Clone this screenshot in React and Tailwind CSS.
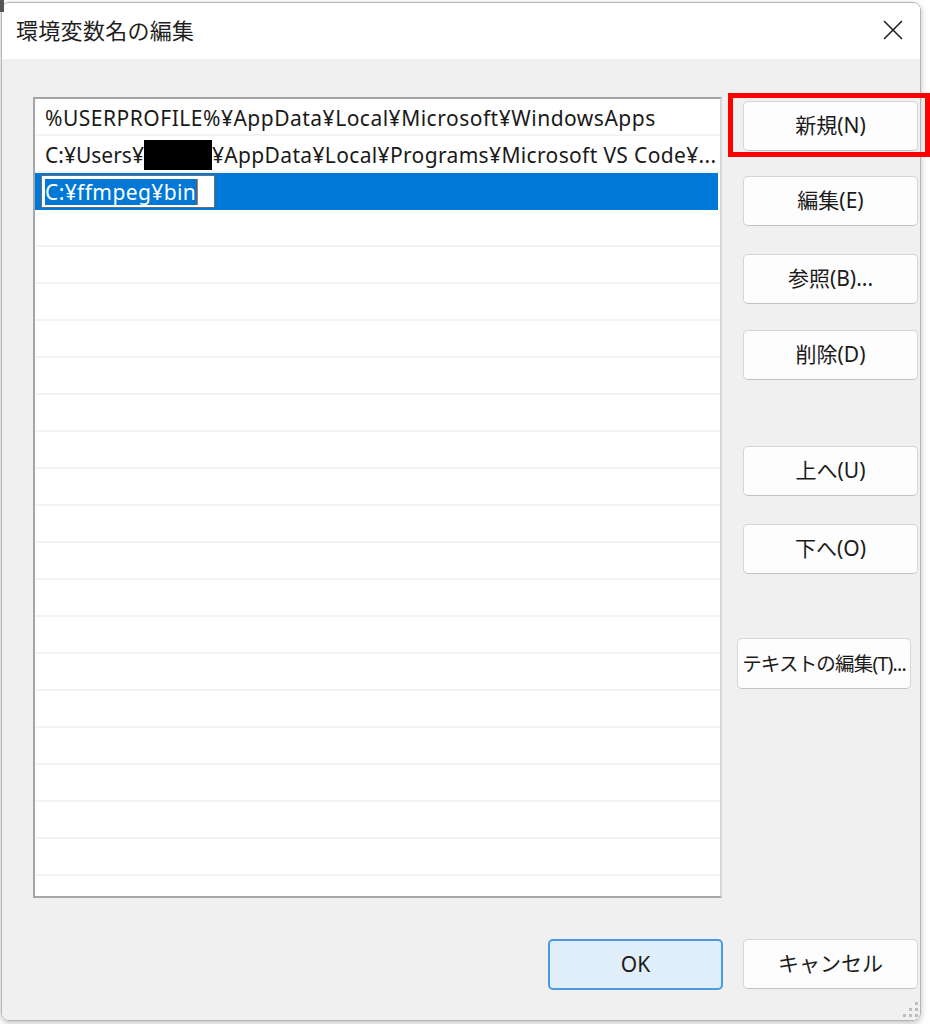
import React from "react";

const font = { fontFamily: '"Noto Sans", "Noto Sans CJK JP", sans-serif' };

function Btn({ children, className = "" }) {
  return (
    <div
      className={
        "h-[50px] w-[175px] flex items-center justify-center rounded-[5px] border border-[#d5d5d5] border-b-[#c2c2c2] bg-[#fdfdfd] text-[21px] text-[#1b1b1b] whitespace-nowrap " +
        className
      }
    >
      {children}
    </div>
  );
}

export default function App() {
  const rows = Array.from({ length: 22 });
  return (
    <div className="relative w-[930px] h-[1024px] bg-white overflow-hidden" style={font}>
      <div className="absolute left-0 top-0 w-[4px] h-[12px] bg-[#555]" />
      <div className="ml-[1px] mt-[2px] w-[920px] h-[1019px] rounded-[8px] border border-[#b4b4b4] overflow-hidden flex flex-col shadow-[0_2px_6px_rgba(0,0,0,0.25)]">
        {/* title bar */}
        <div className="h-[56px] bg-white flex items-center justify-between pl-[14px] pr-[16px]">
          <span className="text-[22px] text-[#1f1f1f] tracking-[0.3px] -mt-[2px]">環境変数名の編集</span>
          <svg width="22" height="22" viewBox="0 0 22 22" className="text-[#222] -mt-[2px]">
            <path d="M2 2 L20 20 M20 2 L2 20" stroke="currentColor" strokeWidth="1.6" fill="none" />
          </svg>
        </div>
        {/* body */}
        <div className="relative flex-1 bg-[#f0f0f0] flex flex-col pl-[31px] pr-[2px] pt-[38px]">
          <div className="flex">
            {/* list */}
            <div className="w-[689px] h-[801px] border-2 border-[#a6a6a6] border-r-[#d8d8d8] border-b-[#a6a6a6] bg-white overflow-hidden">
              <div className="h-[37px] flex items-center pl-[10px] pt-[5px] border-b-2 border-[#f3f3f3] text-[21px] tracking-[0.5px] text-[#1a1a1a] whitespace-nowrap">
                %USERPROFILE%¥AppData¥Local¥Microsoft¥WindowsApps
              </div>
              <div className="h-[37px] flex items-center pl-[10px] pt-[5px] border-b-2 border-[#f3f3f3] text-[21px] text-[#1a1a1a] whitespace-nowrap overflow-hidden">
                <span className="tracking-[0px]">C:¥Users¥</span>
                <span className="inline-block w-[68px] h-[30px] bg-black -mt-[3px]" />
                <span className="tracking-[0.35px]">¥AppData¥Local¥Programs¥Microsoft VS Code¥...</span>
              </div>
              <div className="h-[37px] flex items-center pl-[6px] mr-[2px] bg-[#0078d7]">
                <div className="w-[174px] h-[33px] border border-[#6e6e6e] bg-white flex items-center pl-[3px]">
                  <span className="bg-[#0078d7] text-white text-[21px] tracking-[0.4px] leading-[26px] pr-[1px] whitespace-nowrap">C:¥ffmpeg¥bin</span>
                  <span className="w-[1px] h-[26px] bg-[#e07020]" />
                </div>
              </div>
              {rows.map((_, i) => (
                <div key={i} className="h-[37px] border-b-2 border-[#f3f3f3]" />
              ))}
            </div>
            {/* right buttons */}
            <div className="ml-[21px] flex flex-col pt-[4px]">
              <Btn>新規(N)</Btn>
              <Btn className="mt-[25px]">編集(E)</Btn>
              <Btn className="mt-[28px]">参照(B)...</Btn>
              <Btn className="mt-[26px]">削除(D)</Btn>
              <Btn className="mt-[66px]">上へ(U)</Btn>
              <Btn className="mt-[28px]">下へ(O)</Btn>
              <div className="mt-[64px] -ml-[6px] h-[51px] w-[174px] flex items-center justify-center rounded-[5px] border border-[#d5d5d5] border-b-[#c2c2c2] bg-[#fdfdfd] text-[19.5px] tracking-[-0.8px] text-[#1b1b1b] whitespace-nowrap overflow-hidden">
                テキストの編集(T)...
              </div>
            </div>
          </div>
          {/* bottom buttons */}
          <div className="flex justify-end gap-[20px] mt-[41px]">
            <div className="h-[51px] w-[175px] flex items-center justify-center rounded-[5px] border-2 border-[#4a9ae0] bg-[#e0eef9] text-[21px] text-[#1b1b1b]">
              OK
            </div>
            <Btn>キャンセル</Btn>
          </div>
          {/* resize grip */}
          <svg className="absolute right-[1px] bottom-[2px]" width="16" height="16" viewBox="0 0 16 16">
            <g fill="#bdbdbd">
              <rect x="12" y="0" width="3" height="3" />
              <rect x="6" y="6" width="3" height="3" />
              <rect x="12" y="6" width="3" height="3" />
              <rect x="0" y="12" width="3" height="3" />
              <rect x="6" y="12" width="3" height="3" />
              <rect x="12" y="12" width="3" height="3" />
            </g>
          </svg>
        </div>
      </div>
      {/* red annotation box */}
      <div className="absolute left-[728px] top-[93px] w-[202px] h-[64px] border-[5px] border-[#ff0000]" />
    </div>
  );
}
